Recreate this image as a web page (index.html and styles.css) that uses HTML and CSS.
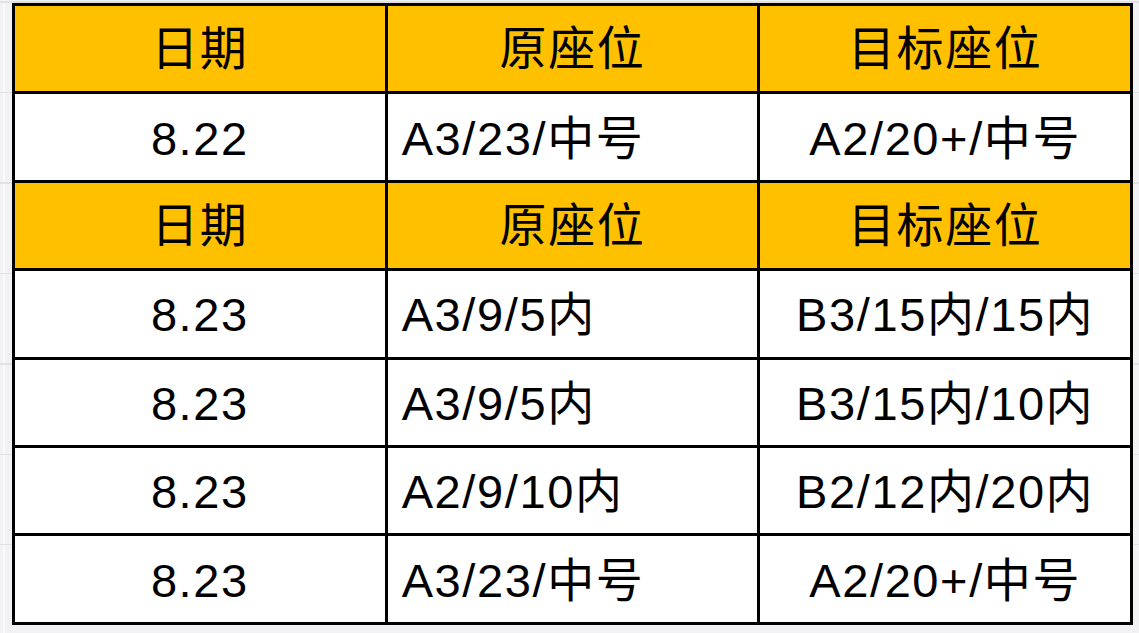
FILE: index.html
```html
<!DOCTYPE html>
<html lang="zh-CN">
<head>
<meta charset="utf-8">
<title>座位调整</title>
<link rel="stylesheet" href="styles.css">
</head>
<body>
<div class="sheet">
  <div class="table">
    <div class="cell head">日期</div>
    <div class="cell head">原座位</div>
    <div class="cell head">目标座位</div>

    <div class="cell">8.22</div>
    <div class="cell left">A3/23/中号</div>
    <div class="cell">A2/20+/中号</div>

    <div class="cell head">日期</div>
    <div class="cell head">原座位</div>
    <div class="cell head">目标座位</div>

    <div class="cell">8.23</div>
    <div class="cell left">A3/9/5内</div>
    <div class="cell">B3/15内/15内</div>

    <div class="cell">8.23</div>
    <div class="cell left">A3/9/5内</div>
    <div class="cell">B3/15内/10内</div>

    <div class="cell">8.23</div>
    <div class="cell left">A2/9/10内</div>
    <div class="cell">B2/12内/20内</div>

    <div class="cell">8.23</div>
    <div class="cell left">A3/23/中号</div>
    <div class="cell">A2/20+/中号</div>
  </div>
</div>
</body>
</html>
```
FILE: styles.css
```css
html, body {
  margin: 0;
  padding: 0;
}

body {
  width: 1139px;
  height: 633px;
  overflow: hidden;
  background-color: #f2f2f4;
  background-image:
    repeating-linear-gradient(to bottom, transparent 0, transparent 89px, #e1e1e4 89px, #e1e1e4 90.4px),
    linear-gradient(to right, transparent 3px, #fafafb 3px, #fafafb 5px, transparent 5px);
  background-position: 0 3px, 0 0;
  font-family: "Liberation Sans", "Noto Sans CJK SC", sans-serif;
  color: #000;
}

.sheet {
  padding: 3px 0 0 12px;
}

.table {
  width: 1121px;
  box-sizing: border-box;
  display: grid;
  grid-template-columns: 1fr 1fr 1fr;
  grid-auto-rows: 85.4px;
  gap: 3px;
  padding: 3px;
  background: #000;
}

.cell {
  background: #fff;
  display: flex;
  align-items: center;
  justify-content: center;
  font-size: 47px;
  letter-spacing: 1.6px;
  line-height: 1;
  padding-top: 2px;
  box-sizing: border-box;
  white-space: nowrap;
}

.cell.head {
  background: #ffc000;
  padding-top: 0;
}

.cell.left {
  justify-content: flex-start;
  padding-left: 14px;
}
```
